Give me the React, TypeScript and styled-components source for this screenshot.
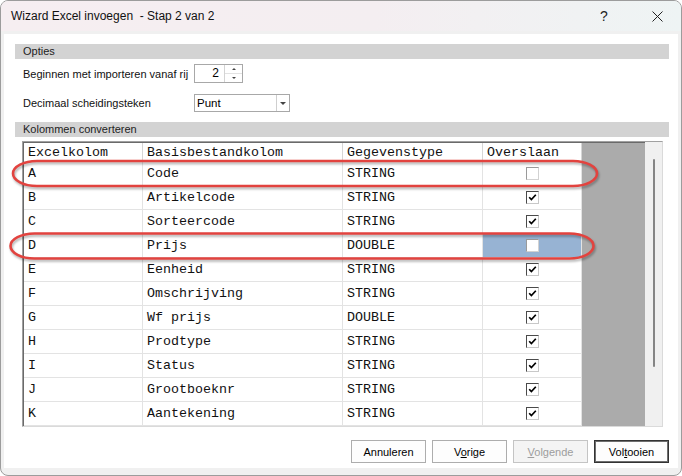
import React from "react";
import styled, { createGlobalStyle } from "styled-components";

const Global = createGlobalStyle`
  html, body { margin: 0; padding: 0; background: #ffffff; }
  body {
    width: 682px; height: 476px; overflow: hidden;
    font-family: "Liberation Sans", Arial, sans-serif;
  }
`;

const Window = styled.div`
  position: relative;
  width: 682px;
  height: 476px;
  box-sizing: border-box;
  border: 1px solid #9c9c9c;
  border-radius: 8px;
  background: #f0f0f0;
  overflow: hidden;
  display: flex;
  flex-direction: column;
`;

const TitleBar = styled.div`
  height: 30px;
  flex: none;
  display: flex;
  align-items: center;
  background: linear-gradient(90deg, #f6eef1 0%, #f4eef1 55%, #eef4f4 100%);
`;

const TitleText = styled.div`
  flex: 1;
  padding-left: 10px;
  font-size: 12px;
  color: #111;
  white-space: pre;
`;

const CaptionButton = styled.div<{ $w: number }>`
  width: ${(p) => p.$w}px;
  height: 30px;
  display: flex;
  align-items: center;
  justify-content: center;
  font-size: 14px;
  color: #222;
`;

const Panel = styled.div`
  flex: 1;
  margin: 3px 3px 7px 3px;
  background: #ffffff;
  padding: 10px 9px 0 11px;
  display: flex;
  flex-direction: column;
  min-height: 0;
`;

const SectionHeader = styled.div<{ $top: number }>`
  margin-top: ${(p) => p.$top}px;
  height: 15px;
  line-height: 15px;
  background: #d3d3d3;
  padding-left: 8px;
  font-size: 11px;
  color: #222;
`;

const OptionRow = styled.div<{ $top: number; $h: number }>`
  margin-top: ${(p) => p.$top}px;
  height: ${(p) => p.$h}px;
  display: grid;
  grid-template-columns: 171px auto;
  align-items: center;
  padding-left: 8px;
  font-size: 11px;
  color: #111;
`;

const SpinBox = styled.div`
  width: 49px;
  height: 19px;
  box-sizing: border-box;
  border: 1px solid #a8a8a8;
  display: flex;
`;

const SpinValue = styled.div`
  flex: 1;
  text-align: right;
  padding-right: 5px;
  font-size: 12px;
  line-height: 17px;
  color: #000;
`;

const SpinButtons = styled.div`
  width: 17px;
  border-left: 1px solid #d4d4d4;
  display: flex;
  flex-direction: column;
`;

const SpinHalf = styled.div<{ $down?: boolean }>`
  flex: 1;
  display: flex;
  align-items: center;
  justify-content: center;
  border-top: ${(p) => (p.$down ? "1px solid #e2e2e2" : "none")};
`;

const Arrow = styled.div<{ $up?: boolean; $w?: number }>`
  width: 0;
  height: 0;
  border-left: ${(p) => (p.$w ?? 2)}px solid transparent;
  border-right: ${(p) => (p.$w ?? 2)}px solid transparent;
  ${(p) =>
    p.$up
      ? "border-bottom: 2px solid #444;"
      : `border-top: ${p.$w && p.$w > 2 ? 3 : 2}px solid #444;`}
`;

const Combo = styled.div`
  width: 96px;
  height: 18px;
  box-sizing: border-box;
  border: 1px solid #a8a8a8;
  display: flex;
`;

const ComboText = styled.div`
  flex: 1;
  padding-left: 2px;
  font-size: 11.5px;
  line-height: 16px;
  color: #000;
`;

const ComboButton = styled.div`
  width: 12px;
  border-left: 1px solid #cfcfcf;
  display: flex;
  align-items: center;
  justify-content: center;
`;

const TableFrame = styled.div`
  margin-top: 4px;
  margin-left: 7px;
  width: 641px;
  height: 286px;
  box-sizing: border-box;
  border-top: 1px solid #a0a0a0;
  border-left: 1px solid #a0a0a0;
  border-right: 1px solid #dadada;
  border-bottom: 1px solid #dadada;
  display: flex;
`;

const GridArea = styled.div`
  flex: 1;
  background: #ababab;
  border-top: 1px solid #6a6a6a;
  border-left: 1px solid #6a6a6a;
  display: flex;
  flex-direction: column;
`;

const GridRow = styled.div<{ $h: number }>`
  display: grid;
  grid-template-columns: 119px 200px 140px 99px;
  width: 558px;
  height: ${(p) => p.$h}px;
  box-sizing: border-box;
  border-bottom: 1px solid #e3e3e3;
  background: #ffffff;
  font-family: "Liberation Mono", "Courier New", monospace;
  font-size: 13.33px;
  color: #111;
`;

const Cell = styled.div<{ $center?: boolean; $selected?: boolean }>`
  border-right: 1px solid #e3e3e3;
  display: flex;
  align-items: center;
  justify-content: ${(p) => (p.$center ? "center" : "flex-start")};
  padding-left: ${(p) => (p.$center ? 0 : 4)}px;
  background: ${(p) => (p.$selected ? "#97b3d3" : "transparent")};
  white-space: pre;
  overflow: hidden;
`;

const HeaderCell = styled(Cell)`
  border-right-color: #d6d6d6;
`;

const CheckBox = styled.div<{ $checked: boolean }>`
  width: 13px;
  height: 13px;
  box-sizing: border-box;
  background: #ffffff;
  border-style: solid;
  border-width: 1px;
  border-color: ${(p) =>
    p.$checked ? "#4a4a4a #c8c8c8 #c8c8c8 #4a4a4a" : "#9a9a9a #d2d2d2 #d2d2d2 #9a9a9a"};
  display: flex;
  align-items: center;
  justify-content: center;
`;

const ScrollBar = styled.div`
  width: 17px;
  background: #f0f0f0;
  padding-top: 17px;
  box-sizing: border-box;
`;

const ScrollThumb = styled.div`
  margin-left: 8px;
  width: 2px;
  height: 208px;
  background: #858585;
  border-radius: 1px;
`;

const ButtonBar = styled.div`
  margin-top: 13px;
  display: flex;
  justify-content: flex-end;
  gap: 6px;
`;

const Button = styled.div<{ $disabled?: boolean; $default?: boolean }>`
  width: 75px;
  height: 23px;
  box-sizing: border-box;
  display: flex;
  align-items: center;
  justify-content: center;
  font-size: 11px;
  background: ${(p) => (p.$disabled ? "#f4f4f4" : "#fdfdfd")};
  color: ${(p) => (p.$disabled ? "#9d9d9d" : "#000")};
  border: 1px solid
    ${(p) => (p.$default ? "#333333" : p.$disabled ? "#c4c4c4" : "#adadad")};
  box-shadow: ${(p) => (p.$default ? "inset 0 0 0 1px #6e6e6e" : "none")};
  u { text-decoration: underline; text-underline-offset: 1px; }
`;

const Overlay = styled.svg`
  position: absolute;
  left: -1px;
  top: -1px;
  width: 682px;
  height: 476px;
  pointer-events: none;
  filter: drop-shadow(1px 2px 1px rgba(0, 0, 0, 0.3));
`;

type Row = { col: string; name: string; type: string; skip: boolean; selected?: boolean };

const rows: Row[] = [
  { col: "A", name: "Code", type: "STRING", skip: false },
  { col: "B", name: "Artikelcode", type: "STRING", skip: true },
  { col: "C", name: "Sorteercode", type: "STRING", skip: true },
  { col: "D", name: "Prijs", type: "DOUBLE", skip: false, selected: true },
  { col: "E", name: "Eenheid", type: "STRING", skip: true },
  { col: "F", name: "Omschrijving", type: "STRING", skip: true },
  { col: "G", name: "Wf prijs", type: "DOUBLE", skip: true },
  { col: "H", name: "Prodtype", type: "STRING", skip: true },
  { col: "I", name: "Status", type: "STRING", skip: true },
  { col: "J", name: "Grootboeknr", type: "STRING", skip: true },
  { col: "K", name: "Aantekening", type: "STRING", skip: true },
];

const Check = () => (
  <svg width="9" height="9" viewBox="0 0 9 9">
    <path d="M1.2 4.2 L3.4 6.6 L7.8 1.8" fill="none" stroke="#000" strokeWidth="1.7" />
  </svg>
);

export default function App() {
  return (
    <>
      <Global />
      <Window>
        <TitleBar>
          <TitleText>Wizard Excel invoegen  - Stap 2 van 2</TitleText>
          <CaptionButton $w={60}>?</CaptionButton>
          <CaptionButton $w={47}>
            <svg width="11" height="11" viewBox="0 0 11 11">
              <path d="M0.5 0.5 L10.5 10.5 M10.5 0.5 L0.5 10.5" stroke="#222" strokeWidth="1" />
            </svg>
          </CaptionButton>
        </TitleBar>
        <Panel>
          <SectionHeader $top={0}>Opties</SectionHeader>
          <OptionRow $top={5} $h={19}>
            <span>Beginnen met importeren vanaf rij</span>
            <SpinBox>
              <SpinValue>2</SpinValue>
              <SpinButtons>
                <SpinHalf>
                  <Arrow $up />
                </SpinHalf>
                <SpinHalf $down>
                  <Arrow />
                </SpinHalf>
              </SpinButtons>
            </SpinBox>
          </OptionRow>
          <OptionRow $top={11} $h={18}>
            <span>Decimaal scheidingsteken</span>
            <Combo>
              <ComboText>Punt</ComboText>
              <ComboButton>
                <Arrow $w={3} />
              </ComboButton>
            </Combo>
          </OptionRow>
          <SectionHeader $top={10}>Kolommen converteren</SectionHeader>
          <TableFrame>
            <GridArea>
              <GridRow $h={19}>
                <HeaderCell>Excelkolom</HeaderCell>
                <HeaderCell>Basisbestandkolom</HeaderCell>
                <HeaderCell>Gegevenstype</HeaderCell>
                <HeaderCell>Overslaan</HeaderCell>
              </GridRow>
              {rows.map((r) => (
                <GridRow $h={24} key={r.col}>
                  <Cell>{r.col}</Cell>
                  <Cell>{r.name}</Cell>
                  <Cell>{r.type}</Cell>
                  <Cell $center $selected={r.selected}>
                    <CheckBox $checked={r.skip}>{r.skip && <Check />}</CheckBox>
                  </Cell>
                </GridRow>
              ))}
            </GridArea>
            <ScrollBar>
              <ScrollThumb />
            </ScrollBar>
          </TableFrame>
          <ButtonBar>
            <Button>Annuleren</Button>
            <Button>
              <span>
                V<u>o</u>rige
              </span>
            </Button>
            <Button $disabled>
              <span>
                <u>V</u>olgende
              </span>
            </Button>
            <Button $default>
              <span>
                Vol<u>t</u>ooien
              </span>
            </Button>
          </ButtonBar>
        </Panel>
        <Overlay viewBox="0 0 682 476">
          <rect x="13" y="161" width="584" height="25" rx="24" ry="12.5" fill="none" stroke="#e2433f" strokeWidth="2.6" />
          <rect x="10.5" y="233.5" width="583" height="25" rx="24" ry="12.5" fill="none" stroke="#e2433f" strokeWidth="2.6" />
        </Overlay>
      </Window>
    </>
  );
}
